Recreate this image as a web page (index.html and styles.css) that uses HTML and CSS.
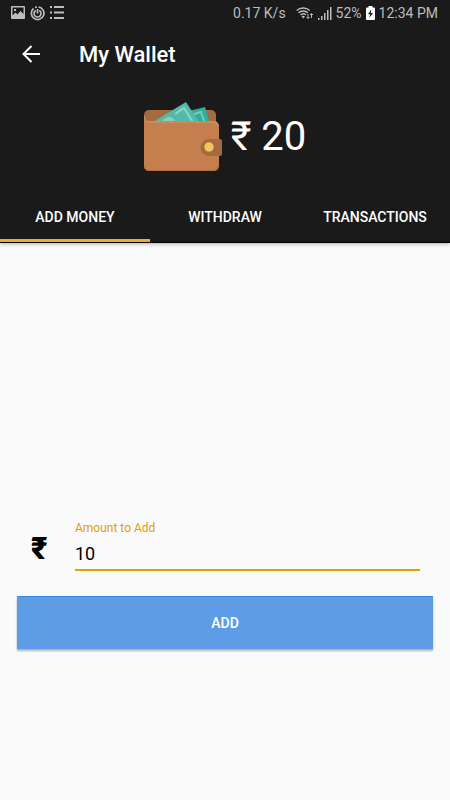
FILE: index.html
```html
<!DOCTYPE html>
<html lang="en">
<head>
  <meta charset="UTF-8" />
  <meta name="viewport" content="width=device-width, initial-scale=1.0"/>
  <title>My Wallet</title>
  <link rel="stylesheet" href="styles.css">
</head>
<body>

  <header>
    <div class="status-bar">
      <div class="status-icons">
        <svg width="14" height="14" viewBox="0 0 14 14" aria-hidden="true">
          <path fill="currentColor" fill-rule="evenodd" d="M1 0h12a1 1 0 0 1 1 1v11a1 1 0 0 1-1 1H1a1 1 0 0 1-1-1V1a1 1 0 0 1 1-1zM1.500 1.500v8l3-3 2 2 3-3.500 3 3V1.500zM3 3h2v2H3z"/>
        </svg>
        <svg width="15" height="15" viewBox="0 0 15 15" fill="none" stroke="currentColor" aria-hidden="true">
          <path stroke-width="1.700" d="M8.500 1A6.300 6.300 0 1 1 3.500 2.500M5 1.500A6.300 6.300 0 0 1 7 1"/>
          <path stroke-width="1.700" d="M9.300 4.500a3.500 3.500 0 1 1-3.600 0M7.500 3v4.500"/>
        </svg>
        <svg width="14" height="14" viewBox="0 0 14 14" fill="currentColor" aria-hidden="true">
          <path d="M0 0h2v2H0zM4 0h10v2H4zM0 5.500h2v2H0zM4 5.500h10v2H4zM0 11h2v2H0zM4 11h10v2H4z"/>
        </svg>
      </div>
      <div class="status-info">
        <span class="speed">0.17 K/s</span>
        <svg width="18" height="14" viewBox="0 0 18 14" fill="none" stroke="currentColor" aria-hidden="true">
          <path stroke-width="1.400" d="M.7 4.500a9.500 9.500 0 0 1 13 0M2.500 6.800a7 7 0 0 1 9.500 0M4.500 9a4.200 4.200 0 0 1 5.500-.2"/>
          <path fill="currentColor" stroke="none" d="M5.500 10.500a2.500 2.500 0 0 1 3.500 0L7.300 12.500z"/>
          <path stroke-width="1" d="M12 8v4.500M10.500 11l1.500 1.500 1.500-1.500M15.500 12V7.500M14 9l1.500-1.500L17 9"/>
        </svg>
        <svg width="14" height="13" viewBox="0 0 14 13" fill="currentColor" aria-hidden="true">
          <path d="M0 11h1.500v2H0zM3 9h1.500v4H3zM6 6h1.500v7H6zM9 3h1.500v10H9zM12 0h1.500v13H12z"/>
        </svg>
        <span>52%</span>
        <svg width="9" height="14" viewBox="0 0 9 14" aria-hidden="true">
          <path fill="#fff" d="M2.500 0h4v1.500H8a1 1 0 0 1 1 1V13a1 1 0 0 1-1 1H1a1 1 0 0 1-1-1V2.500a1 1 0 0 1 1-1h1.500z"/>
          <path fill="#1a1a1a" d="M5.200 3.500L2 8.300h2.200L3.300 12 7 7H4.800z"/>
        </svg>
        <span>12:34 PM</span>
      </div>
    </div>

    <div class="app-bar">
      <button type="button" class="back-btn" aria-label="Back">
        <svg width="18" height="18" viewBox="0 0 18 18" fill="none" stroke="#fff" stroke-width="2" aria-hidden="true">
          <path d="M18 9H1.500M9.500 1L1.500 9l8 8"/>
        </svg>
      </button>
      <h1>My Wallet</h1>
    </div>

    <div class="balance">
      <svg width="78" height="70" viewBox="0 0 78 70" aria-hidden="true">
        <path fill="#a66a40" d="M5 8h62a5 5 0 0 1 5 5v14H0V13a5 5 0 0 1 5-5z"/>
        <path fill="#2fae99" d="M41 10L61 5l8 26H38z"/>
        <path fill="none" stroke="#78ccbd" stroke-width="2" d="M50 12l7-2 5 15"/>
        <path fill="#51bba8" d="M4 23L42 0l20 31H8z"/>
        <path fill="none" stroke="#8ed5c9" stroke-width="2" d="M31 12l9-6 10 16"/>
        <circle cx="25" cy="22" r="7" fill="#83d0c3"/>
        <path fill="#c57f4e" d="M0 13c0 4 2 6 6 6h64a5 5 0 0 1 5 5v40a5 5 0 0 1-5 5H5a5 5 0 0 1-5-5z"/>
        <path fill="none" stroke="#d39769" d="M.500 14c0 4 2 6 6 6H70a4 4 0 0 1 4 4"/>
        <path fill="none" stroke="#b06d40" d="M.500 64a4 4 0 0 0 4 4.500h65.500a4 4 0 0 0 4-4"/>
        <path fill="#a66a40" d="M65 37h11a2 2 0 0 1 2 2v13a2 2 0 0 1-2 2H65a8.500 8.500 0 0 1 0-17z"/>
        <circle cx="65" cy="45" r="4.700" fill="#efc75e"/>
      </svg>
      <span class="amount">₹ 20</span>
    </div>

    <nav class="tabs">
      <a href="#add" class="active">ADD MONEY</a>
      <a href="#withdraw">WITHDRAW</a>
      <a href="#transactions">TRANSACTIONS</a>
    </nav>
  </header>

  <main>
    <form id="add">
      <div class="form-group">
        <span class="currency">₹</span>
        <div class="field">
          <label for="amount">Amount to Add</label>
          <input type="text" id="amount" inputmode="numeric" value="10" />
        </div>
      </div>
      <button type="submit" class="btn">ADD</button>
    </form>
  </main>

</body>
</html>
```
FILE: styles.css
```css
:root {
  --dark: #1a1a1a;
  --accent: #e0a000;
  --background: #fafafa;
}

* {
  box-sizing: border-box;
}

body {
  margin: 0;
  min-height: 100vh;
  display: flex;
  flex-direction: column;
  font-family: Roboto, sans-serif;
  background-color: var(--background);
}

header {
  background-color: var(--dark);
  color: white;
  border-bottom: 1px solid #000;
  box-shadow: 0 1px 4px rgba(0,0,0,0.3);
}

.status-bar {
  display: flex;
  justify-content: space-between;
  align-items: center;
  height: 26px;
  padding: 0 12px 0 11px;
  color: #bdbdbd;
  font-size: 14px;
}

.status-icons,
.status-info {
  display: flex;
  align-items: center;
}

.status-icons {
  gap: 5px;
}

.status-info {
  gap: 4px;
}

.speed {
  margin-right: 6px;
}

.app-bar {
  display: flex;
  align-items: center;
  height: 56px;
  padding: 0 22px;
}

.back-btn {
  display: flex;
  width: 57px;
  padding: 0;
  background: none;
  border: none;
  cursor: pointer;
}

h1 {
  margin: 0;
  font-size: 22px;
  font-weight: 500;
}

.balance {
  display: flex;
  justify-content: center;
  align-items: center;
  gap: 9px;
  height: 109px;
}

.amount {
  font-size: 40px;
}

.tabs {
  display: grid;
  grid-template-columns: repeat(3, 1fr);
}

.tabs a {
  height: 51px;
  line-height: 52px;
  border-bottom: 3px solid transparent;
  color: white;
  font-size: 14px;
  font-weight: 500;
  text-align: center;
  text-decoration: none;
}

.tabs a.active {
  border-color: #f0ad2b;
}

main {
  flex: 1;
  display: flex;
  flex-direction: column;
}

main::before {
  content: "";
  flex: 1;
}

form {
  flex: 1 0 0;
  padding: 0 17px;
}

.form-group {
  display: flex;
  align-items: center;
  margin-bottom: 25px;
  padding-right: 13px;
}

.currency {
  width: 58px;
  padding: 4px 0 0 14px;
  font-size: 31px;
  font-weight: 900;
}

.field {
  flex: 1;
}

label {
  display: block;
  color: var(--accent);
  font-size: 12px;
  line-height: 12px;
}

input {
  display: block;
  width: 100%;
  height: 37px;
  padding: 4px 0 0;
  background: none;
  border: none;
  border-bottom: 2px solid var(--accent);
  color: #000;
  font-family: inherit;
  font-size: 18px;
  outline: none;
}

.btn {
  display: block;
  width: 100%;
  height: 53px;
  background: #5e9de6;
  color: white;
  border: none;
  border-top: 1px solid #2f8de4;
  box-shadow: 0 2px 2px rgba(0,0,0,0.3);
  font-family: inherit;
  font-size: 14px;
  font-weight: 500;
  cursor: pointer;
}
```
